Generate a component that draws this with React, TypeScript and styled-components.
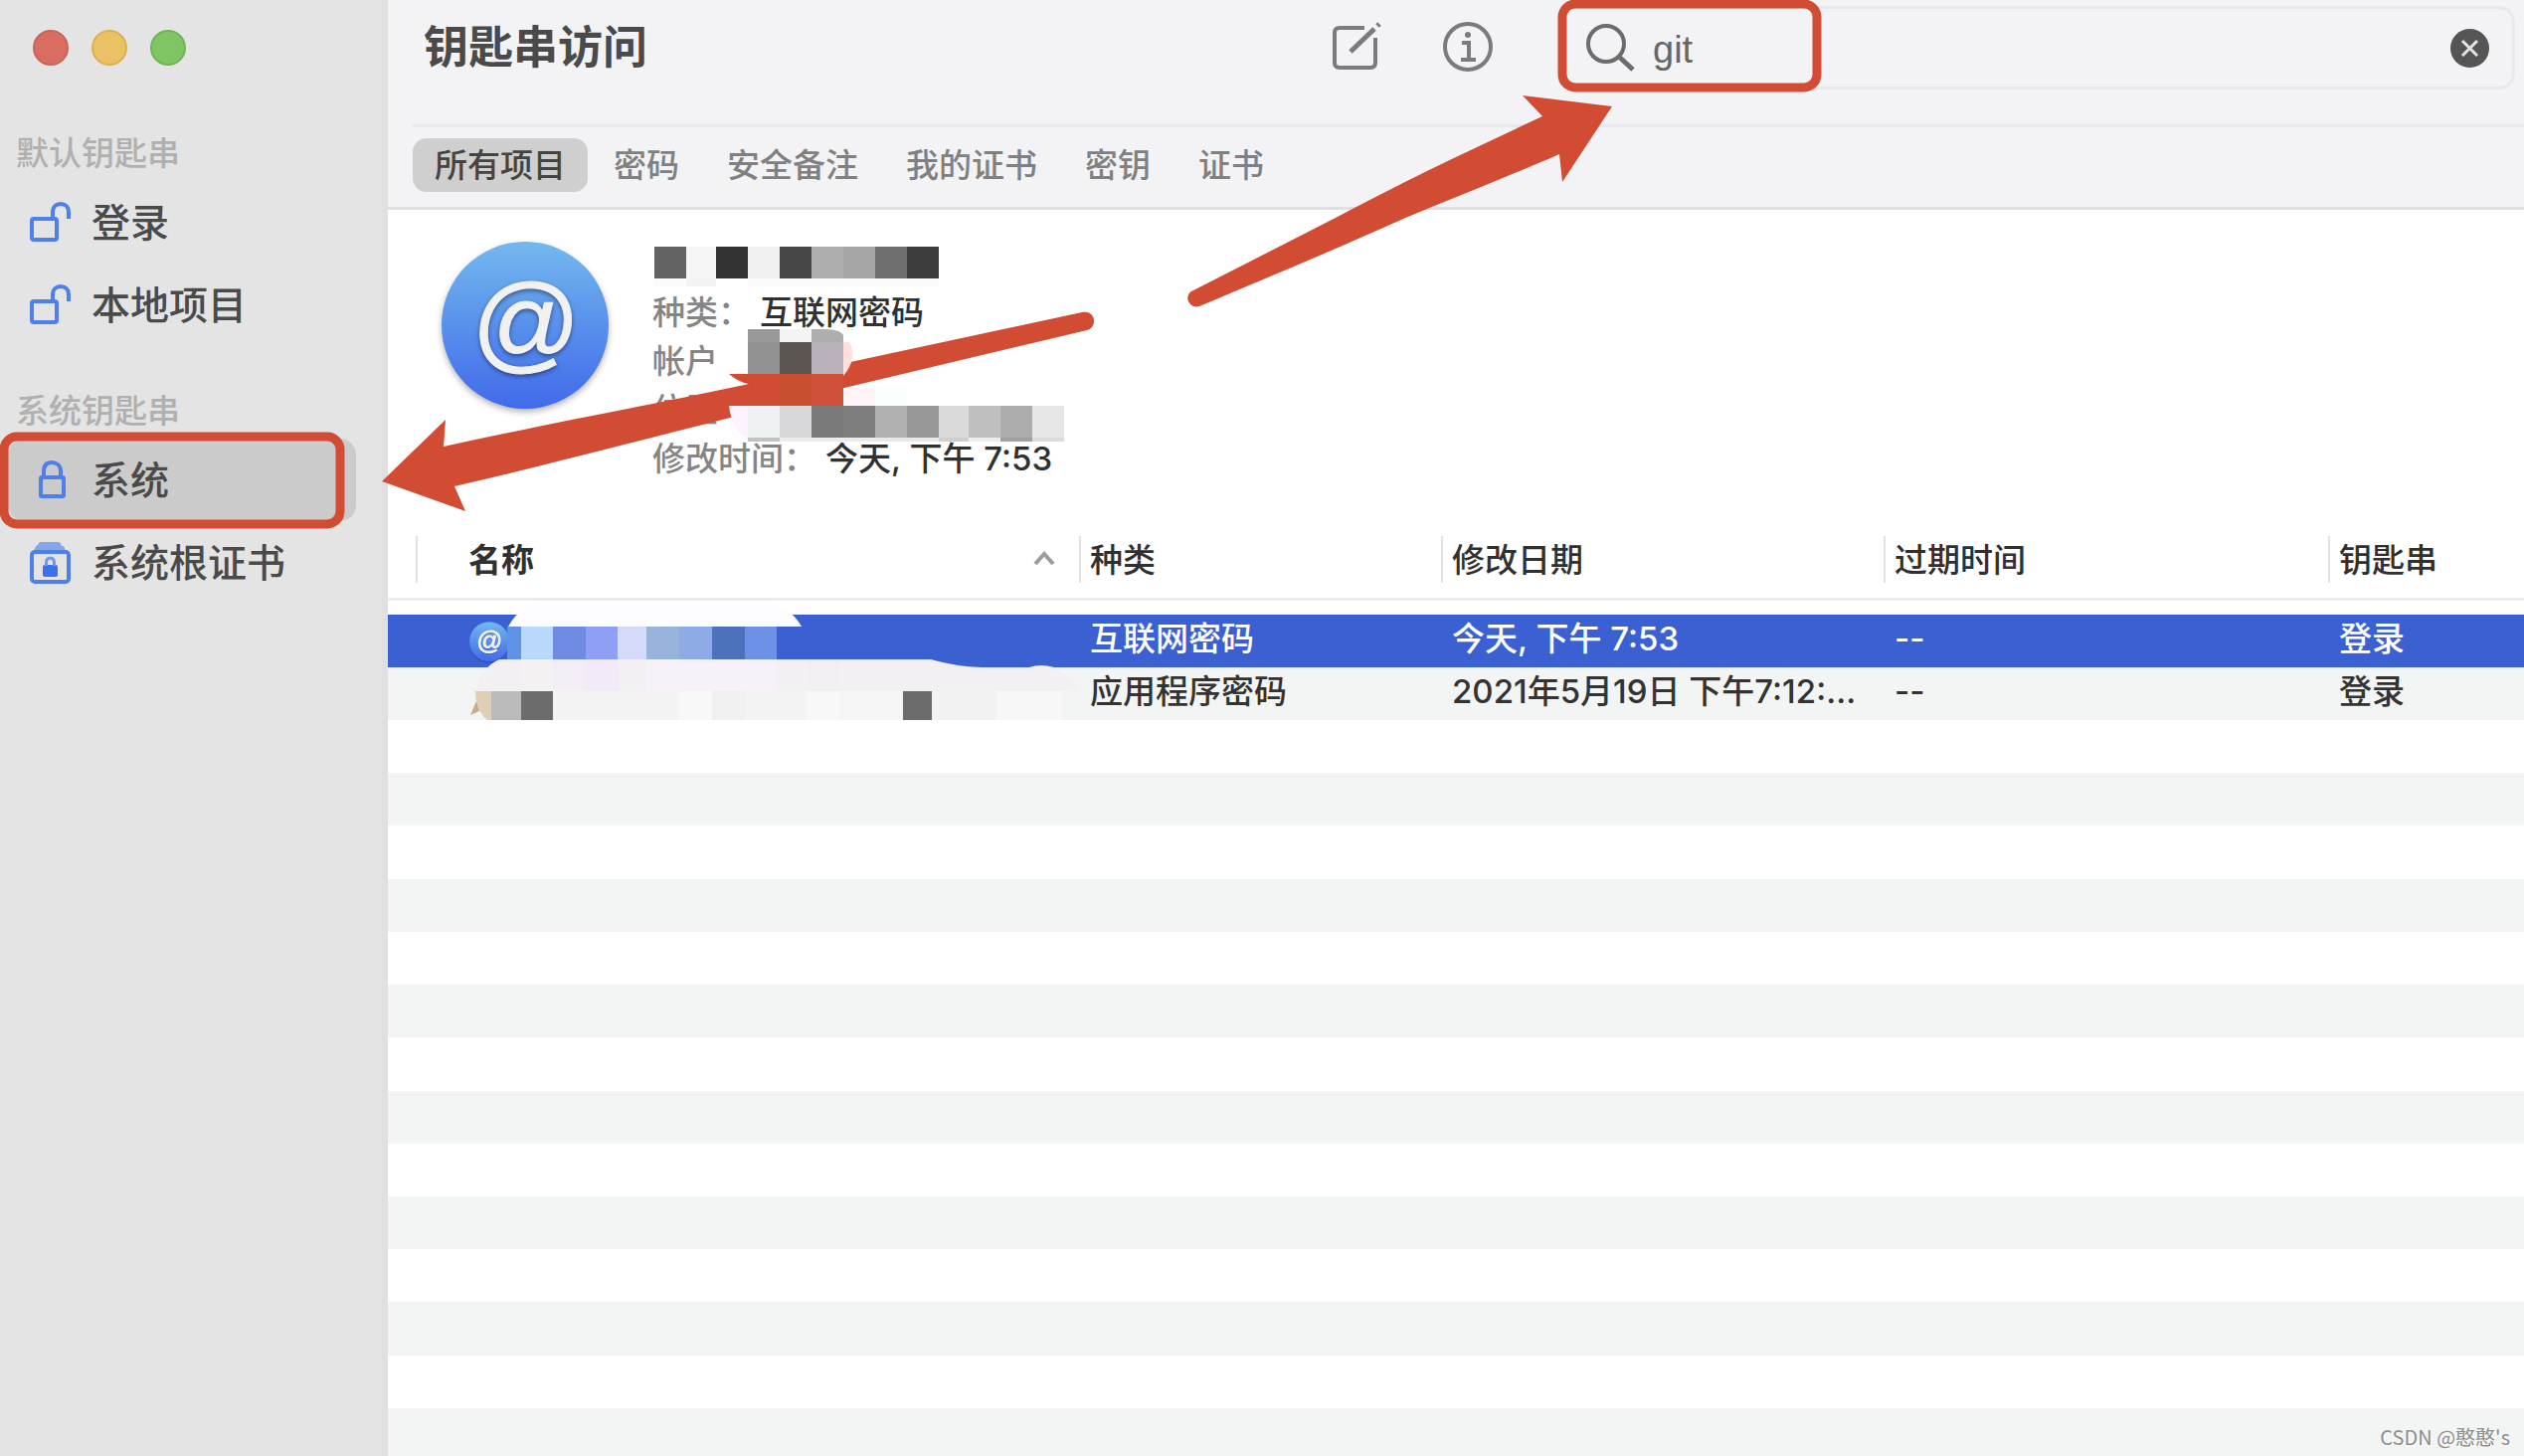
import React from "react";
import styled, { createGlobalStyle } from "styled-components";

const red = "#d24c33";
const blue = "#4f80ea";

const GlobalStyle = createGlobalStyle`
  *, *::before, *::after { box-sizing: border-box; }
  body {
    margin: 0;
    background: #fff;
    color: #303030;
    font-family: Inter, "Noto Sans CJK SC", sans-serif;
    font-size: 33px;
  }
  button, input { font: inherit; color: inherit; border: 0; background: none; padding: 0; margin: 0; }
`;

const Window = styled.div`
  position: relative;
  display: flex;
  min-height: 100vh;
  overflow: hidden;
`;

const Sidebar = styled.aside`
  flex: none;
  width: 390px;
  padding-top: 30px;
  background: #e4e4e4;
  border-right: 6px solid #e0e0e0;
`;

const Lights = styled.div`
  display: flex;
  gap: 23px;
  padding-left: 33px;
  margin-bottom: 60px;
`;

const Light = styled.button<{ $fill: string; $edge: string }>`
  width: 36px;
  height: 36px;
  border-radius: 50%;
  background: ${(p) => p.$fill};
  border: 2px solid ${(p) => p.$edge};
`;

const Group = styled.nav`
  margin-bottom: 37px;
`;

const GroupTitle = styled.h2`
  margin: 0;
  padding-left: 16px;
  font-size: 33px;
  font-weight: 500;
  line-height: 56px;
  color: #b0b0b0;
`;

const SideItem = styled.button<{ $active?: boolean }>`
  display: flex;
  align-items: center;
  width: 350px;
  height: 83px;
  margin-left: 8px;
  padding-left: 20px;
  gap: 18px;
  border-radius: 16px;
  font-size: 39px;
  font-weight: 500;
  line-height: 56px;
  color: #4a4a4a;
  background: ${(p) => (p.$active ? "#cbcbcb" : "transparent")};

  svg { flex: none; }
`;

const Main = styled.main`
  flex: 1;
  min-width: 0;
  display: flex;
  flex-direction: column;
`;

const Toolbar = styled.header`
  background: #f3f3f5;
  border-bottom: 3px solid #dfdfdf;
`;

const TitleRow = styled.div`
  display: flex;
  align-items: center;
  height: 96px;
  padding: 0 9px 0 36px;
  margin-bottom: 29px;
`;

const Title = styled.h1`
  flex: 1;
  margin: 0;
  font-size: 45px;
  font-weight: 700;
  line-height: 60px;
  color: #4a4a4a;
`;

const Actions = styled.div`
  display: flex;
  gap: 57px;
  margin-right: 65px;
`;

const IconButton = styled.button`
  display: flex;
  width: 54px;
  height: 54px;
`;

const Search = styled.label`
  flex: 0 1 961px;
  display: flex;
  align-items: center;
  height: 84px;
  padding: 0 23px;
  gap: 16px;
  border: 3px solid #e9e9eb;
  border-radius: 16px;

  svg { flex: none; }
`;

const SearchInput = styled.input`
  flex: 1;
  min-width: 0;
  padding-top: 3px;
  font-family: "Liberation Sans", "Noto Sans CJK SC", sans-serif;
  font-size: 38px;
  line-height: 48px;
  color: #666;
  outline: none;
`;

const ClearButton = styled.button`
  display: flex;
  width: 39px;
  height: 39px;
`;

const Tabs = styled.div`
  display: flex;
  gap: 4px;
  margin-left: 25px;
  padding: 11px 0 15px;
  border-top: 3px solid #e9e9eb;
`;

const Tab = styled.button<{ $active?: boolean }>`
  height: 54px;
  padding: 0 22px;
  border-radius: 14px;
  line-height: 54px;
  font-weight: 500;
  color: ${(p) => (p.$active ? "#444" : "#808080")};
  background: ${(p) => (p.$active ? "#cfcfcf" : "transparent")};
`;

const Details = styled.section`
  display: flex;
  gap: 44px;
  padding: 31px 54px 53px;
`;

const Facts = styled.div`
  padding-top: 6px;
`;

const HiddenName = styled.svg`
  display: block;
  margin-left: 2px;
`;

const FactList = styled.dl`
  margin: 0;
`;

const Fact = styled.div`
  display: flex;
  gap: 9px;
  line-height: 49px;
`;

const FactLabel = styled.dt`
  font-weight: 500;
  color: #858585;
`;

const FactValue = styled.dd`
  margin: 0;
  font-weight: 500;
`;

const Table = styled.table`
  width: 100%;
  table-layout: fixed;
  border-collapse: separate;
  border-spacing: 0;
  text-align: left;

  tbody::before { content: ""; display: block; height: 14px; }
`;

const HeadCell = styled.th`
  padding: 0 0 15px;
  border-bottom: 3px solid #ebebeb;
  font-weight: 500;
`;

const HeadLabel = styled.div<{ $wide?: boolean }>`
  display: flex;
  align-items: center;
  justify-content: space-between;
  height: 47px;
  padding: 0 24px 4px ${(p) => (p.$wide ? 51 : 9)}px;
  border-left: 2px solid #e2e2e2;
  font-weight: ${(p) => (p.$wide ? 700 : 500)};
`;

const Row = styled.tr<{ $selected?: boolean }>`
  height: 53px;
  color: ${(p) => (p.$selected ? "#fff" : "#333")};
  background: ${(p) => (p.$selected ? "#3b60d2" : "#f3f5f4")};
`;

const Cell = styled.td<{ $icon?: boolean }>`
  padding: ${(p) => (p.$icon ? "0 12px 0 54px" : "0 4px 5px 11px")};
  line-height: 48px;
  font-weight: 500;
  white-space: nowrap;
  overflow: hidden;
  text-overflow: ellipsis;

  svg { display: block; }
`;

const Stripes = styled.div`
  flex: 1;
  display: grid;
  grid-auto-rows: 1fr;
  margin-bottom: -5px;
`;

const Stripe = styled.div`
  &:nth-child(even) { background: #f3f5f4; }
`;

const Overlay = styled.svg`
  position: absolute;
  top: 0;
  left: 0;
  pointer-events: none;
`;

const Watermark = styled.div`
  position: absolute;
  right: 14px;
  bottom: 5px;
  font-family: "Noto Sans CJK SC", sans-serif;
  font-size: 20px;
  line-height: 28px;
  color: #8c8c8c;
  text-shadow: 1px 1px 0 #fff;
`;

const UnlockedIcon = () => (
  <svg width="46" height="44" viewBox="0 0 46 44" fill="none" stroke={blue} strokeWidth="4">
    <rect x="4" y="18" width="25" height="21" rx="2" />
    <path d="M25 18V11c0-5 3-8 8-8s8 3 8 8v7" />
  </svg>
);

const LockedIcon = () => (
  <svg width="46" height="44" viewBox="0 0 46 44" fill="none" stroke={blue} strokeWidth="4">
    <rect x="13" y="19" width="23" height="19" rx="1" />
    <path d="M16 19v-6c0-6 3-9 8-9s9 3 9 9v6" />
  </svg>
);

const RootIcon = () => (
  <svg width="46" height="46" viewBox="0 0 46 46" fill="none" stroke={blue} strokeWidth="4">
    <path d="M12 2h20l2 4H9z" fill="#83a6ee" stroke="none" />
    <path d="M8 6h28l2 5H6z" fill="#83a6ee" stroke="none" />
    <rect x="4" y="12" width="37" height="30" rx="3" />
    <rect x="15" y="25" width="15" height="12" rx="2" fill="#3f6fea" stroke="none" />
    <path d="M18.500 26v-3c0-3 1.500-5 4-5s4 2 4 5v3" stroke="#6f98ec" strokeWidth="3" />
  </svg>
);

const AtBadge = ({ size }: { size: number }) => (
  <svg width={size} height={size} viewBox="0 0 168 168" overflow="visible">
    <defs>
      <linearGradient id={`sky${size}`} x1="0" y1="0" x2="0" y2="1">
        <stop offset="0" stopColor="#74b8ee" />
        <stop offset="0.5" stopColor="#5890ec" />
        <stop offset="1" stopColor="#426aea" />
      </linearGradient>
    </defs>
    <circle
      cx="84"
      cy="85"
      r="84"
      fill={`url(#sky${size})`}
      style={{ filter: "drop-shadow(0 3px 3px rgba(0,0,0,.3))" }}
    />
    <text
      x="85"
      y="119"
      textAnchor="middle"
      fontFamily="Liberation Sans"
      fontSize="108"
      fill="#f1f1f1"
      stroke="#f1f1f1"
      strokeWidth={size < 100 ? 4 : 1}
      style={{ filter: "drop-shadow(0 2px 2px rgba(0,0,0,.45))" }}
    >
      @
    </text>
  </svg>
);

/* A strip of pixelation blocks: each entry is [x, width, colour]. */
type Block = [number, number, string];
const Blocks = ({ y, h, cells }: { y: number; h: number; cells: Block[] }) => (
  <g shapeRendering="crispEdges">
    {cells.map(([x, w, fill]) => (
      <rect key={x} x={x} y={y} width={w} height={h} fill={fill} />
    ))}
  </g>
);

const nameBlocks: Block[] = [
  [0, 32, "#636363"], [32, 30, "#f5f5f5"], [62, 32, "#323232"], [94, 32, "#f1f1f1"], [126, 32, "#464646"],
  [158, 32, "#aeaeae"], [190, 32, "#a6a6a6"], [222, 32, "#6f6f6f"], [254, 32, "#3c3c3c"],
];
const nameShade: Block[] = [[0, 32, "#fbfbfb"], [32, 30, "#f3f3f3"], [94, 192, "#fafafa"]];

const Annotations = () => (
  <Overlay width="2538" height="1464" viewBox="0 0 2538 1464" aria-hidden="true">
    <g fill={red}>
      <path d="M384 484 448 422 446 449 C560 424 680 402 753 386 L1088 314 C1102 311 1104 329 1093 332 L849 390 734 420 C650 441 560 465 457 489 L468 514Z" />
      <path d="M1621 107 1531 96 1551 117 C1480 150 1410 183 1341 220 L1198 293 C1190 298 1196 311 1206 308 C1270 281 1340 252 1411 220 C1464 198 1520 176 1568 155 L1571 183Z" />
    </g>
    <g fill="none" stroke={red} strokeWidth="9">
      <rect x="4" y="439" width="338" height="88" rx="13" />
      <rect x="1571" y="4" width="256" height="84" rx="13" />
    </g>

    <path d="M752 340C734 344 722 358 733 372 L736 376H752Z" fill="#fff" />
    <Blocks y={331} h={13} cells={[[752, 32, "#999"], [784, 32, "#f4f4f4"]]} />
    <path d="M816 331h16q14 1 16 6v7h-32z" fill="#aeaeae" />
    <Blocks y={344} h={32} cells={[[752, 32, "#929292"], [784, 32, "#5c5652"], [816, 32, "#b8b0ba"]]} />
    <path d="M848 344h6q9 16-6 34z" fill="#ffe0de" />
    <path d="M733 376H848V390L753 386Q742 384 733 376Z" fill={red} />
    <path d="M753 386Q733 396 734 408H848V386Z" fill={red} />
    <Blocks y={376} h={32} cells={[[784, 32, "#c94f31"], [816, 32, "#cf5139"]]} />
    <Blocks y={390} h={18} cells={[[848, 32, "#fff5f6"], [880, 32, "#fafeff"]]} />
    <path d="M733 408h19v34Q736 432 733 408Z" fill="#fdf3fe" />
    <Blocks
      y={408}
      h={32}
      cells={[
        [752, 32, "#eef1f1"], [784, 32, "#d7d7d9"], [816, 32, "#7a7a7a"], [848, 32, "#7e7e7e"], [880, 32, "#b1b1b1"],
        [912, 32, "#989898"], [944, 30, "#dadada"], [974, 32, "#bfbfbf"], [1006, 32, "#adadad"], [1038, 32, "#e6e6e6"],
      ]}
    />
    <Blocks
      y={440}
      h={4}
      cells={[
        [752, 32, "#c2c2c2"], [784, 96, "#ececec"], [880, 64, "#e8e8e8"], [944, 30, "#cfcfcf"],
        [974, 32, "#eee"], [1006, 32, "#a0a0a0"], [1038, 32, "#dcdcdc"],
      ]}
    />

    <path d="M511 630Q524 606 552 604H764Q794 608 806 630Z" fill="#fdfcff" />
    <Blocks
      y={630}
      h={33}
      cells={[
        [510, 14, "#5f93e4"], [524, 32, "#b9d8fb"], [556, 33, "#6e8ae2"], [589, 32, "#8e9ff5"], [621, 29, "#d5dafb"],
        [650, 33, "#99b4dc"], [683, 33, "#8eabe8"], [716, 33, "#4b72bb"], [749, 32, "#6e91e8"],
      ]}
    />
    <path d="M480 695Q482 672 502 663H936Q960 670 987 671H1035Q1046 667 1060 671Q1078 680 1085 695Z" fill="#f3f0f4" />
    <Blocks
      y={663}
      h={32}
      cells={[[524, 32, "#f3f1f2"], [556, 33, "#f3eef6"], [589, 32, "#f2eaf8"], [650, 130, "#f7f1f9"], [812, 32, "#f1eff2"]]}
    />
    <path d="M478 695h16v29h-4Q478 714 478 695Z" fill="#dfcfb5" />
    <path d="M473 719l6-14 3 10z" fill="#c9a98c" />
    <Blocks
      y={695}
      h={29}
      cells={[
        [494, 30, "#bbb"], [524, 32, "#6c6c6c"], [556, 127, "#f2f3f2"], [683, 33, "#f8f8f8"], [716, 33, "#f0f0f0"],
        [749, 62, "#f3f3f3"], [811, 33, "#f8f8f8"], [844, 64, "#f5f5f5"], [908, 29, "#6c6c6c"], [937, 65, "#f2f2f2"],
        [1002, 66, "#f7f7f7"],
      ]}
    />
  </Overlay>
);

const tabs = ["所有项目", "密码", "安全备注", "我的证书", "密钥", "证书"];

export default function App() {
  return (
    <>
      <GlobalStyle />
      <Window>
        <Sidebar>
          <Lights>
            <Light aria-label="关闭" $fill="#d96d61" $edge="#cf6257" />
            <Light aria-label="最小化" $fill="#eac263" $edge="#ddb054" />
            <Light aria-label="缩放" $fill="#7fc563" $edge="#70b454" />
          </Lights>
          <Group aria-labelledby="default-group">
            <GroupTitle id="default-group">默认钥匙串</GroupTitle>
            <SideItem><UnlockedIcon />登录</SideItem>
            <SideItem><UnlockedIcon />本地项目</SideItem>
          </Group>
          <Group aria-labelledby="system-group">
            <GroupTitle id="system-group">系统钥匙串</GroupTitle>
            <SideItem $active><LockedIcon />系统</SideItem>
            <SideItem><RootIcon />系统根证书</SideItem>
          </Group>
        </Sidebar>

        <Main>
          <Toolbar>
            <TitleRow>
              <Title>钥匙串访问</Title>
              <Actions>
                <IconButton aria-label="新建">
                  <svg width="54" height="54" viewBox="0 0 54 54" fill="none" stroke="#7b7b7d" strokeWidth="4">
                    <path d="M34 7H9q-5 0-5 5v30q0 5 5 5h31q5 0 5-5V17" />
                    <path d="M20 31 44 8" strokeWidth="5" />
                    <path d="M47 5l2-2" strokeWidth="5" />
                  </svg>
                </IconButton>
                <IconButton aria-label="简介">
                  <svg width="54" height="54" viewBox="0 0 54 54" fill="none" stroke="#7b7b7d" strokeWidth="4">
                    <circle cx="27" cy="26" r="23" />
                    <circle cx="27" cy="14" r="3" fill="#7b7b7d" stroke="none" />
                    <path d="M21 22h7v17M20 39h15" />
                  </svg>
                </IconButton>
              </Actions>
              <Search>
                <svg width="52" height="48" viewBox="0 0 52 48" fill="none" stroke="#6c6c6c" strokeWidth="4">
                  <circle cx="21" cy="20" r="18" />
                  <path d="M34 33l14 13" strokeWidth="5" />
                </svg>
                <SearchInput type="text" aria-label="搜索" defaultValue="git" />
                <ClearButton aria-label="清除">
                  <svg width="39" height="39" viewBox="0 0 39 39">
                    <circle cx="19.500" cy="19.500" r="19.500" fill="#555" />
                    <path d="M12 12l15 15M27 12L12 27" stroke="#e4e4e4" strokeWidth="3" />
                  </svg>
                </ClearButton>
              </Search>
            </TitleRow>
            <Tabs>
              {tabs.map((name, i) => (
                <Tab key={name} $active={i === 0}>{name}</Tab>
              ))}
            </Tabs>
          </Toolbar>

          <Details>
            <AtBadge size={168} />
            <Facts>
              <HiddenName width="286" height="42" viewBox="0 0 286 42">
                <Blocks y={0} h={32} cells={nameBlocks} />
                <Blocks y={32} h={8} cells={nameShade} />
              </HiddenName>
              <FactList>
                <Fact><FactLabel>种类：</FactLabel><FactValue>互联网密码</FactValue></Fact>
                <Fact><FactLabel>帐户</FactLabel></Fact>
                <Fact><FactLabel>位置</FactLabel></Fact>
                <Fact><FactLabel>修改时间：</FactLabel><FactValue>今天, 下午 7:53</FactValue></Fact>
              </FactList>
            </Facts>
          </Details>

          <Table>
            <colgroup>
              <col width="28" />
              <col width="667" />
              <col width="364" />
              <col width="445" />
              <col width="447" />
              <col />
            </colgroup>
            <thead>
              <tr>
                <HeadCell as="td" />
                <HeadCell>
                  <HeadLabel $wide>
                    名称
                    <svg width="22" height="16" viewBox="0 0 22 16" fill="none" stroke="#9c9c9c" strokeWidth="4">
                      <path d="M2 14l9-10 9 10" />
                    </svg>
                  </HeadLabel>
                </HeadCell>
                <HeadCell><HeadLabel>种类</HeadLabel></HeadCell>
                <HeadCell><HeadLabel>修改日期</HeadLabel></HeadCell>
                <HeadCell><HeadLabel>过期时间</HeadLabel></HeadCell>
                <HeadCell><HeadLabel>钥匙串</HeadLabel></HeadCell>
              </tr>
            </thead>
            <tbody>
              <Row $selected>
                <Cell />
                <Cell $icon><AtBadge size={40} /></Cell>
                <Cell>互联网密码</Cell>
                <Cell>今天, 下午 7:53</Cell>
                <Cell>--</Cell>
                <Cell>登录</Cell>
              </Row>
              <Row>
                <Cell />
                <Cell />
                <Cell>应用程序密码</Cell>
                <Cell>2021年5月19日 下午7:12:...</Cell>
                <Cell>--</Cell>
                <Cell>登录</Cell>
              </Row>
            </tbody>
          </Table>
          <Stripes>
            {Array.from({ length: 14 }, (_, i) => <Stripe key={i} />)}
          </Stripes>
        </Main>

        <Annotations />
        <Watermark>CSDN @憨憨's</Watermark>
      </Window>
    </>
  );
}
